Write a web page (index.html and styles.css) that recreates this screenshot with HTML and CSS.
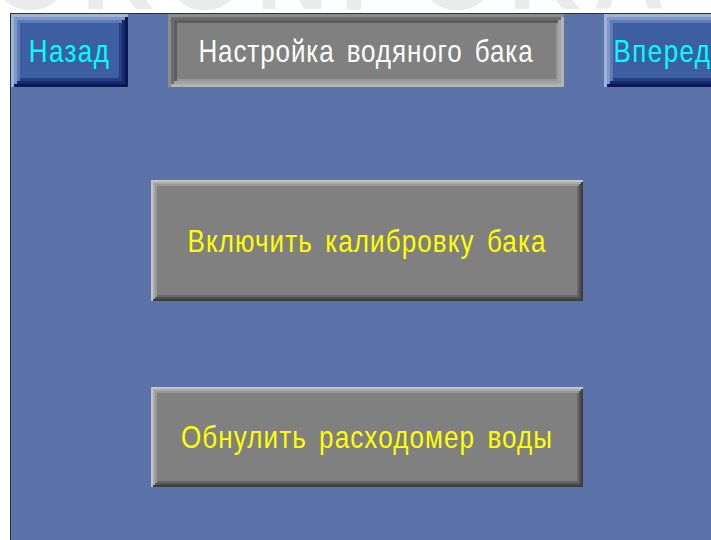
FILE: index.html
```html
<!DOCTYPE html>
<html lang="ru">
<head>
<meta charset="utf-8">
<title>Настройка водяного бака</title>
<link rel="stylesheet" href="styles.css">
</head>
<body>
<div class="watermark" aria-hidden="true"><span>OKONPOKA</span></div>
<main class="screen">
  <header class="top-bar">
    <button class="nav-btn"><span class="lbl">Назад</span></button>
    <div class="title-box"><span class="lbl">Настройка водяного бака</span></div>
    <button class="nav-btn"><span class="lbl">Вперед</span></button>
  </header>
  <section class="actions">
    <button class="action-btn calib"><span class="lbl">Включить калибровку бака</span></button>
    <button class="action-btn reset"><span class="lbl">Обнулить расходомер воды</span></button>
  </section>
</main>
</body>
</html>
```

FILE: styles.css
```css
html, body {
  margin: 0;
  height: 100%;
  overflow: hidden;
  background: #ffffff;
}

/* faint brand mark peeking above the panel */
.watermark {
  height: 13px;
  overflow: hidden;
}
.watermark span {
  display: block;
  margin-top: -76px;
  margin-left: -8px;
  font: bold 100px/1 "Liberation Sans", sans-serif;
  letter-spacing: 12px;
  color: #ebebeb;
  white-space: nowrap;
}

.screen {
  box-sizing: border-box;
  height: 527px;
  margin-left: 10px;
  background: #5b73a8;
  border-top: 1px solid #2b2f38;
  border-left: 1px solid #2b2f38;
  overflow: hidden;
}

/* tall, slightly spaced panel lettering */
.lbl {
  display: inline-block;
  font-family: "Liberation Sans", Arial, sans-serif;
  font-size: 26px;
  line-height: 1;
  letter-spacing: 1.1px;
  word-spacing: 4px;
  white-space: nowrap;
  transform: scaleY(1.18);
}

.top-bar {
  display: flex;
  gap: 40px;
  width: max-content;
  height: 73px;
}

.nav-btn {
  flex: none;
  width: 117px;
  height: 73px;
  padding: 0;
  border: 0;
  display: flex;
  align-items: center;
  justify-content: center;
  background: #3d5ea0;
  color: #00ffff;
  box-shadow:
    inset 3px 3px 0 #9fb2da,
    inset -3px -3px 0 #0b1850,
    inset 6px 6px 0 #7f98c9,
    inset -6px -6px 0 #16296a,
    inset 9px 9px 0 #5f7bb6,
    inset -9px -9px 0 #243f88;
}
.nav-btn .lbl {
  letter-spacing: 1.4px;
}

.title-box {
  flex: none;
  width: 396px;
  height: 73px;
  display: flex;
  align-items: center;
  justify-content: center;
  background: #808080;
  color: #ffffff;
  box-shadow:
    inset 3px 3px 0 #8c8c8c,
    inset -3px -3px 0 #b4b4b4,
    inset 6px 6px 0 #6c6c6c,
    inset -6px -6px 0 #a4a4a4,
    inset 9px 9px 0 #5c5c5c,
    inset -8px -8px 0 #969696;
}
.title-box .lbl {
  letter-spacing: 0.9px;
}

.actions {
  display: flex;
  flex-direction: column;
  align-items: flex-start;
  gap: 86px;
  padding: 93px 0 0 140px;
}

.action-btn {
  width: 432px;
  padding: 0;
  border: 0;
  display: flex;
  align-items: center;
  justify-content: center;
  background: #808080;
  color: #ffff00;
  box-shadow:
    inset 2px 2px 0 #c4c4c4,
    inset -2px -2px 0 #3e3e3e,
    inset 4px 4px 0 #aaaaaa,
    inset -4px -4px 0 #505050,
    inset 6px 6px 0 #979797,
    inset -6px -6px 0 #686868;
}
.calib { height: 121px; }
.reset { height: 100px; }
```
